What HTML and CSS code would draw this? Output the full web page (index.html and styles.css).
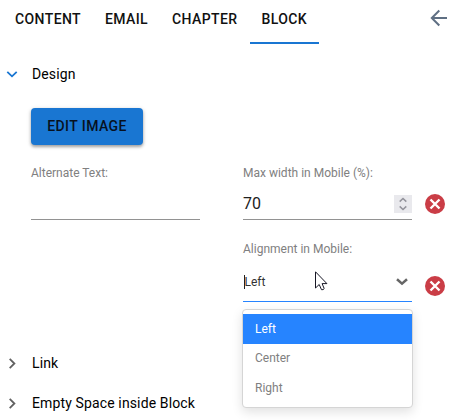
FILE: index.html
```
<!DOCTYPE html>
<html lang="en">
<head>
<meta charset="utf-8">
<title>Block settings</title>
<link rel="stylesheet" href="styles.css">
</head>
<body>
<main class="panel">
  <header class="header">
    <nav class="tabs">
      <a class="tab tab-content">CONTENT</a>
      <a class="tab tab-email">EMAIL</a>
      <a class="tab tab-chapter">CHAPTER</a>
      <a class="tab tab-block active">BLOCK</a>
    </nav>
    <svg class="back" width="18" height="18" viewBox="0 0 18 18"><path d="M17 9H2M9.300 1.500L1.800 9l7.500 7.500"/></svg>
  </header>
  <section class="design">
    <div class="section-head open">
      <svg class="chevron" width="12" height="12" viewBox="0 0 12 12"><path d="M1.300 3.800L6 8.300l4.700-4.500"/></svg>
      <span>Design</span>
    </div>
    <div class="content">
      <button class="edit">EDIT IMAGE</button>
      <div class="fields">
        <div class="field">
          <span class="label">Alternate Text:</span>
          <div class="control"></div>
        </div>
        <div class="column">
          <div class="row">
            <div class="field">
              <span class="label">Max width in Mobile (%):</span>
              <div class="control number"><span>70</span>
                <span class="spinner"><svg width="18" height="18" viewBox="0 0 18 18"><path d="M5.700 6.600L9 3.500l3.300 3.100M5.700 11.400L9 14.500l3.300-3.100"/></svg></span>
              </div>
            </div>
            <svg class="remove" width="20" height="20" viewBox="0 0 20 20"><circle cx="10" cy="10" r="10"/><path d="M5.500 5.500l9 9M14.500 5.500l-9 9"/></svg>
          </div>
          <div class="row second">
            <div class="field">
              <span class="label">Alignment in Mobile:</span>
              <div class="control select"><span class="value">Left</span>
                <svg class="arrow" width="12" height="8" viewBox="0 0 12 8"><path d="M1 1.300l5 4.400 5-4.400"/></svg>
              </div>
              <div class="menu">
                <div class="option selected">Left</div>
                <div class="option">Center</div>
                <div class="option">Right</div>
              </div>
            </div>
            <svg class="remove" width="20" height="20" viewBox="0 0 20 20"><circle cx="10" cy="10" r="10"/><path d="M5.500 5.500l9 9M14.500 5.500l-9 9"/></svg>
          </div>
        </div>
      </div>
    </div>
  </section>
  <div class="section-head">
    <svg class="chevron" width="12" height="12" viewBox="0 0 12 12"><path d="M3.700 1.800l4.700 4.700-4.700 4.700"/></svg>
    <span>Link</span>
  </div>
  <div class="section-head">
    <svg class="chevron" width="12" height="12" viewBox="0 0 12 12"><path d="M3.700 1.800l4.700 4.700-4.700 4.700"/></svg>
    <span>Empty Space inside Block</span>
  </div>
  <svg class="cursor" width="13" height="20" viewBox="0 0 13 20"><path d="M.5.800v16.200l3.700-3.500 2.300 5.200q1.800.400 2.700-1.100l-2.100-5h4.800z"/></svg>
</main>
</body>
</html>
```
FILE: styles.css
```
* { box-sizing: border-box; }
body {
  margin: 0;
  background: #fff;
  color: #111;
  font-family: Roboto, "Liberation Sans", sans-serif;
  font-size: 14px;
}
svg { display: block; fill: none; }
.panel { position: relative; height: 420px; overflow: hidden; }
.header { display: flex; height: 44px; padding-left: 3px; }
.tabs { display: flex; }
.tab {
  height: 44px;
  padding: 0 12px;
  line-height: 39px;
  font-weight: 500;
  letter-spacing: .4px;
  white-space: nowrap;
  border-bottom: 2px solid transparent;
}
.tab-content { width: 90px; }
.tab-email { width: 67px; }
.tab-chapter { width: 90px; }
.tab-block { width: 69px; padding-left: 11.500px; }
.tab.active { border-color: #1976d2; }
.back { margin: 9px 6px 0 auto; stroke: #5f6f83; stroke-width: 2; }
.design { height: 299px; padding-top: 10px; }
.section-head {
  display: flex;
  align-items: center;
  height: 40px;
  padding-left: 6px;
  gap: 14px;
  color: #000;
  letter-spacing: .13px;
}
.chevron { stroke: #616161; stroke-width: 1.8; }
.open .chevron { stroke: #1976d2; }
.content { padding: 14px 0 0 31px; }
.edit {
  display: block;
  width: 112px;
  height: 37px;
  padding: 0;
  border: 0;
  border-radius: 4px;
  background: #1976d2;
  color: #07111f;
  font: 500 14px/37px Roboto, sans-serif;
  letter-spacing: .4px;
  box-shadow: 0 2px 3px rgba(0, 0, 0, .3), 0 1px 5px rgba(0, 0, 0, .14);
}
.fields { display: flex; gap: 43px; padding-top: 20px; }
.field { position: relative; width: 169px; }
.label { display: block; font-size: 12px; line-height: 16px; color: #808080; white-space: nowrap; }
.control { height: 39px; border-bottom: 1px solid #929292; }
.row { display: flex; gap: 13px; }
.row .remove { margin-top: 29px; }
.number { display: flex; justify-content: space-between; font-size: 16px; line-height: 45px; color: #212121; }
.spinner { width: 18px; height: 18px; margin-top: 14px; background: #e9e9ed; }
.spinner svg { stroke: #93939b; stroke-width: 1.5; }
.remove { flex: none; }
.remove circle { fill: #ca3d46; }
.remove path { stroke: #fff; stroke-width: 2.4; }
.second { margin-top: 21px; }
.second .remove { margin-top: 35px; }
.select {
  display: flex;
  align-items: center;
  justify-content: space-between;
  height: 45px;
  padding: 6px 4px 0 1px;
  border-color: #2684ff;
  font-size: 12px;
  color: #333;
}
.value { border-left: 1px solid #222; line-height: 14px; text-indent: -.5px; }
.arrow { stroke: #666; stroke-width: 2.5; }
.menu {
  position: absolute;
  top: 68px;
  left: -1px;
  width: 171px;
  height: 99px;
  padding-top: 4px;
  border: 1px solid #d5d5d5;
  border-radius: 4px;
  background: #fff;
  box-shadow: 0 4px 11px rgba(0, 0, 0, .12);
}
.option { height: 29.500px; padding-left: 12px; font-size: 12px; line-height: 29px; color: #808080; }
.option.selected { height: 30px; line-height: 30px; background: #2684ff; color: #fff; }
.cursor { position: absolute; left: 315px; top: 271px; fill: #fff; stroke: #171725; stroke-width: 1; }
```
